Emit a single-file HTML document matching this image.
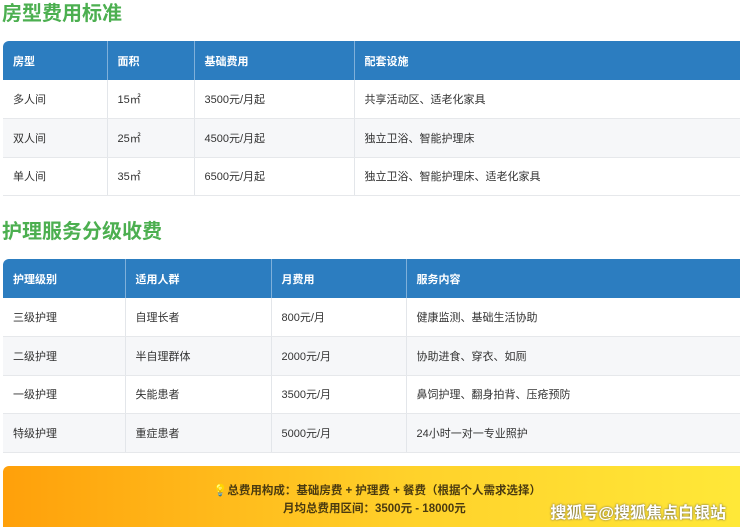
<!DOCTYPE html><html><head><meta charset="utf-8"><style>
body{margin:0;width:740px;height:527px;overflow:hidden;background:#fff;font-family:"Liberation Sans","Noto Sans CJK SC",sans-serif;position:relative}
h2{position:absolute;left:2px;margin:0;font-size:20px;font-weight:bold;color:#4caf50;line-height:24px}
table{position:absolute;left:3px;width:740px;border-collapse:collapse;font-size:11px;color:#333;border-radius:6px 0 0 0;overflow:hidden}
th{background:#2c7dc0;color:#fff;text-align:left;font-weight:bold;height:39px;padding:0 0 0 10px;border-right:1px solid #7fb0da;box-sizing:border-box}
td{height:38.5px;padding:0 0 0 10px;border-right:1px solid #e3e6ea;border-bottom:1px solid #e6e8eb;box-sizing:border-box}
tr:nth-child(odd) td{background:#f6f7f9}
.b{position:absolute;left:3px;top:466px;width:737px;height:61px;background:linear-gradient(90deg,#ffa00a,#ffd12a 55%,#ffe838);border-radius:6px 0 0 0;font-size:11.5px;font-weight:bold;color:#4a3a10;text-align:center}
.w{position:absolute;right:14px;top:499px;color:#fff;font-size:16px;font-weight:bold;text-shadow:0 0 2px #555}
</style></head><body>
<h2 style="top:2px">房型费用标准</h2>
<table style="top:41px"><tr><th style="width:104px">房型</th><th style="width:87px">面积</th><th style="width:160px">基础费用</th><th>配套设施</th></tr>
<tr><td>多人间</td><td>15㎡</td><td>3500元/月起</td><td>共享活动区、适老化家具</td></tr>
<tr><td>双人间</td><td>25㎡</td><td>4500元/月起</td><td>独立卫浴、智能护理床</td></tr>
<tr><td>单人间</td><td>35㎡</td><td>6500元/月起</td><td>独立卫浴、智能护理床、适老化家具</td></tr></table>
<h2 style="top:220px">护理服务分级收费</h2>
<table style="top:259px"><tr><th style="width:122px">护理级别</th><th style="width:146px">适用人群</th><th style="width:135px">月费用</th><th>服务内容</th></tr>
<tr><td>三级护理</td><td>自理长者</td><td>800元/月</td><td>健康监测、基础生活协助</td></tr>
<tr><td>二级护理</td><td>半自理群体</td><td>2000元/月</td><td>协助进食、穿衣、如厕</td></tr>
<tr><td>一级护理</td><td>失能患者</td><td>3500元/月</td><td>鼻饲护理、翻身拍背、压疮预防</td></tr>
<tr><td>特级护理</td><td>重症患者</td><td>5000元/月</td><td>24小时一对一专业照护</td></tr></table>
<div class="b"><div style="position:absolute;left:210px;top:16px">💡总费用构成：基础房费 + 护理费 + 餐费（根据个人需求选择）</div><div style="position:absolute;left:280px;top:34px">月均总费用区间：3500元 - 18000元</div></div>
<div class="w">搜狐号@搜狐焦点白银站</div>
</body></html>
